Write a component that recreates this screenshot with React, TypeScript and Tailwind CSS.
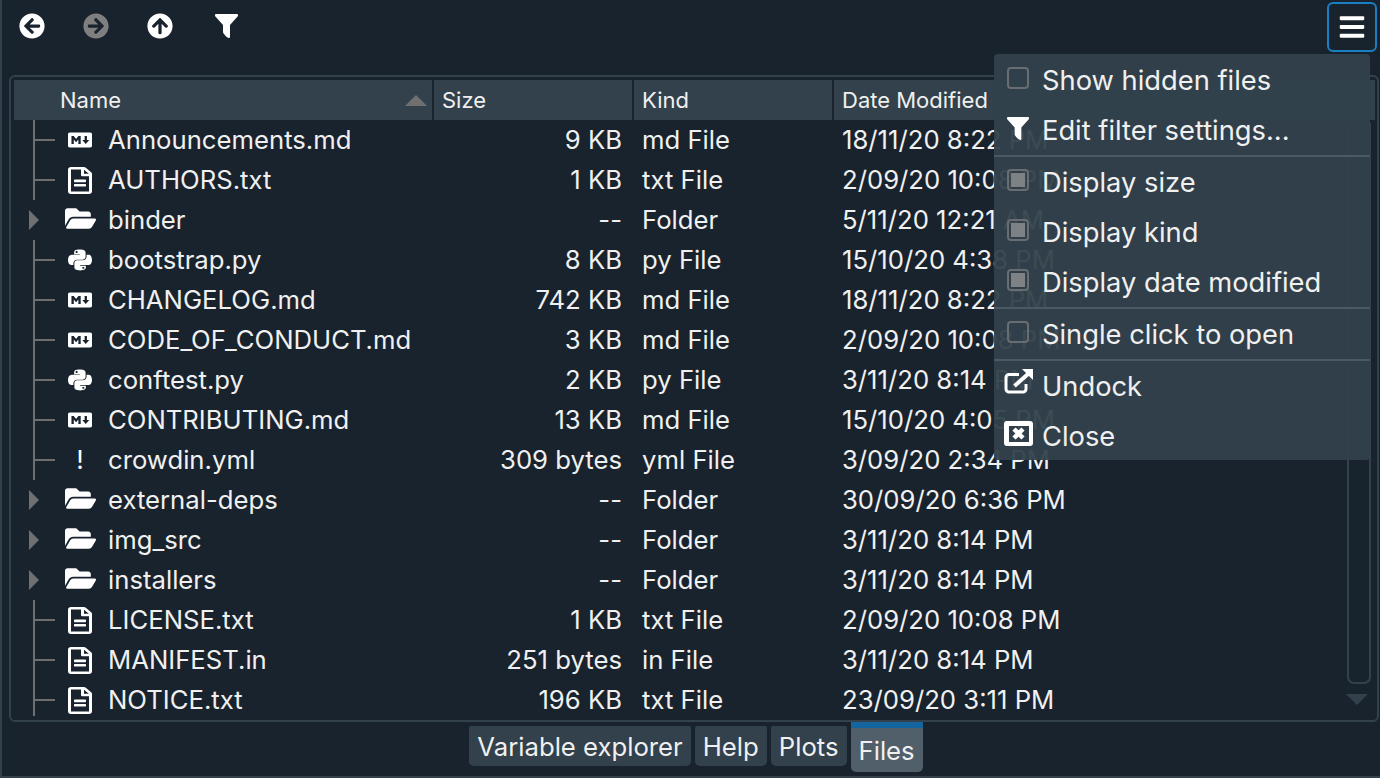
import type { ReactNode } from "react";
import { FaArrowCircleLeft, FaArrowCircleRight, FaArrowCircleUp, FaBars, FaFolderOpen, FaMarkdown, FaPython, FaRegFileAlt } from "react-icons/fa";

type Kind = "md" | "txt" | "folder" | "py" | "yml";

const FILES: { name: string; size: string; kind: string; date: string; icon: Kind }[] = [
  { name: "Announcements.md", size: "9 KB", kind: "md File", date: "18/11/20 8:22 PM", icon: "md" },
  { name: "AUTHORS.txt", size: "1 KB", kind: "txt File", date: "2/09/20 10:08 PM", icon: "txt" },
  { name: "binder", size: "--", kind: "Folder", date: "5/11/20 12:21 AM", icon: "folder" },
  { name: "bootstrap.py", size: "8 KB", kind: "py File", date: "15/10/20 4:38 PM", icon: "py" },
  { name: "CHANGELOG.md", size: "742 KB", kind: "md File", date: "18/11/20 8:22 PM", icon: "md" },
  { name: "CODE_OF_CONDUCT.md", size: "3 KB", kind: "md File", date: "2/09/20 10:08 PM", icon: "md" },
  { name: "conftest.py", size: "2 KB", kind: "py File", date: "3/11/20 8:14 PM", icon: "py" },
  { name: "CONTRIBUTING.md", size: "13 KB", kind: "md File", date: "15/10/20 4:05 PM", icon: "md" },
  { name: "crowdin.yml", size: "309 bytes", kind: "yml File", date: "3/09/20 2:34 PM", icon: "yml" },
  { name: "external-deps", size: "--", kind: "Folder", date: "30/09/20 6:36 PM", icon: "folder" },
  { name: "img_src", size: "--", kind: "Folder", date: "3/11/20 8:14 PM", icon: "folder" },
  { name: "installers", size: "--", kind: "Folder", date: "3/11/20 8:14 PM", icon: "folder" },
  { name: "LICENSE.txt", size: "1 KB", kind: "txt File", date: "2/09/20 10:08 PM", icon: "txt" },
  { name: "MANIFEST.in", size: "251 bytes", kind: "in File", date: "3/11/20 8:14 PM", icon: "txt" },
  { name: "NOTICE.txt", size: "196 KB", kind: "txt File", date: "23/09/20 3:11 PM", icon: "txt" },
];

function FilterIcon({ className }: { className: string }) {
  return (
    <svg viewBox="0 0 23 24" className={className}>
      <path d="M1 0 H22 Q23 0 23 1 V2 L15 11 V23 Q15 24 14 24 Q12 24 9 20 Q8 19 8 18 V11 L0 2 V1 Q0 0 1 0 Z" fill="#fff" />
    </svg>
  );
}

function FileIcon({ icon }: { icon: Kind }) {
  if (icon === "md") return <FaMarkdown className="shrink-0 text-[24px] text-white" />;
  if (icon === "txt") return <FaRegFileAlt preserveAspectRatio="none" className="h-[27px] w-6 shrink-0 text-white" />;
  if (icon === "py") return <FaPython preserveAspectRatio="none" className="h-6 w-6 shrink-0 text-white" />;
  if (icon === "folder") return <FaFolderOpen className="mt-[-3px] shrink-0 text-[31px] text-white" />;
  return <span className="text-[26px] leading-none text-white">!</span>;
}

function TreeMark({ folder }: { folder: boolean }) {
  if (folder) {
    return (
      <div className="flex h-full w-[34px] items-center">
        <svg width="10" height="20" viewBox="0 0 10 20" className="ml-[-4px]">
          <path d="M0 0 L10 10 L0 20 Z" fill="#707070" />
        </svg>
      </div>
    );
  }
  return (
    <div className="flex h-full w-[34px] items-center border-l-2 border-[#6f6f6f]">
      <div className="h-0.5 w-5 bg-[#6f6f6f]" />
    </div>
  );
}

function Check({ on }: { on: boolean }) {
  return (
    <div className="mt-[-4px] flex h-[22px] w-[22px] items-center justify-center rounded-[4px] border-2 border-[#686d72]">
      {on && <div className="h-[14px] w-[14px] bg-[#7e8285]" />}
    </div>
  );
}

function MenuItem({ icon, label }: { icon: ReactNode; label: string }) {
  return (
    <div className="flex h-[50px] shrink-0 items-center">
      <div className="flex w-[48px] justify-center">{icon}</div>
      <span className="pt-0.5">{label}</span>
    </div>
  );
}

function Tab({ label }: { label: string }) {
  return (
    <div className="mt-1 flex h-10 items-center rounded-b-[5px] rounded-t-[2px] bg-[#32414b] px-2 pt-0.5">
      {label}
    </div>
  );
}

export default function App() {
  return (
    <div className="relative flex h-[778px] w-[1380px] flex-col overflow-hidden bg-[#19232d] font-['Inter'] text-[25.7px] text-[#f0f0f0]">
      <div className="flex h-[778px] flex-col border-b-2 border-l-2 border-[#32414b] pl-[7px]">
        {/* Toolbar */}
        <div className="flex h-[75px] items-start">
          <div className="flex items-center pl-[10px] pt-[13px]">
            <FaArrowCircleLeft className="mr-[38px] text-[26px] text-white" />
            <FaArrowCircleRight className="mr-[38px] text-[26px] text-[#7f7f7f]" />
            <FaArrowCircleUp className="mr-[42px] text-[26px] text-white" />
            <FilterIcon className="h-6 w-[23px]" />
          </div>
          <div className="ml-auto mr-[3px] mt-[2px] flex h-[50px] w-[50px] items-center justify-center rounded-[6px] border-2 border-[#1a7fc2]">
            <FaBars className="text-[28px] text-white" />
          </div>
        </div>

        {/* File tree */}
        <div className="relative mr-px h-[647px] overflow-hidden rounded-[6px] border-2 border-[#32414b] pl-[3px] pr-[2px] pt-[3px]">
          <div className="flex h-10 gap-0.5 text-[22px]">
            <div className="flex w-[418px] items-center justify-between bg-[#32414b] pl-[46px] pr-[5px]">
              <span className="pt-px">Name</span>
              <svg width="22" height="11" viewBox="0 0 22 11">
                <path d="M11 0 L22 11 L0 11 Z" fill="#707070" />
              </svg>
            </div>
            <div className="flex w-[198px] items-center bg-[#32414b] pl-2 pt-px">Size</div>
            <div className="flex w-[198px] items-center bg-[#32414b] pl-2 pt-px">Kind</div>
            <div className="flex flex-1 items-center bg-[#32414b] pl-2 pt-px">Date Modified</div>
          </div>
          <div className="h-[596px] overflow-hidden">
            {FILES.map((file) => (
              <div key={file.name} className="flex h-10 items-center">
                <div className="flex h-full w-[420px] items-center pl-[19px]">
                  <TreeMark folder={file.icon === "folder"} />
                  <div className="mr-[15px] flex w-[26px] justify-center">
                    <FileIcon icon={file.icon} />
                  </div>
                  <span>{file.name}</span>
                </div>
                <div className="w-[188px] text-right">{file.size}</div>
                <div className="w-[220px] pl-[20px]">{file.kind}</div>
                <div>{file.date}</div>
              </div>
            ))}
          </div>

          {/* Scrollbar */}
          <div className="absolute right-[6px] top-[46px] h-[561px] w-6 rounded-b-[7px] border-2 border-[#32414b]" />
          <svg width="22" height="11" viewBox="0 0 22 11" className="absolute right-[9px] top-[617px]">
            <path d="M0 0 L22 0 L11 11 Z" fill="#32414b" />
          </svg>
        </div>

        {/* Tabs */}
        <div className="flex justify-center pl-[3px]">
          <div className="flex items-start gap-1">
            <Tab label="Variable explorer" />
            <Tab label="Help" />
            <Tab label="Plots" />
            <div className="flex h-[50px] flex-col rounded-b-[5px] border-t-[6px] border-[#1464a0] bg-[#505f69] px-2 pt-1">
              Files
            </div>
          </div>
        </div>
      </div>

      {/* Options menu */}
      <div className="absolute left-[994px] top-[54px] flex h-[406px] w-[376px] flex-col overflow-hidden rounded-[4px] bg-[#32414b]/95 pt-px text-[27.3px]">
        <MenuItem icon={<Check on={false} />} label="Show hidden files" />
        <MenuItem icon={<FilterIcon className="mt-[-3px] h-[23px] w-[22px]" />} label="Edit filter settings..." />
        <div className="h-0.5 shrink-0 bg-[#4a5a65]" />
        <MenuItem icon={<Check on />} label="Display size" />
        <MenuItem icon={<Check on />} label="Display kind" />
        <MenuItem icon={<Check on />} label="Display date modified" />
        <div className="h-0.5 shrink-0 bg-[#4a5a65]" />
        <MenuItem icon={<Check on={false} />} label="Single click to open" />
        <div className="h-0.5 shrink-0 bg-[#4a5a65]" />
        <MenuItem
          icon={
            <svg width="29" height="25" viewBox="0 0 29 25" className="mt-[-9px]">
              <path d="M15 5.5 H5 a3 3 0 0 0 -3 3 V20 a3 3 0 0 0 3 3 H19 a3 3 0 0 0 3 -3 V15" fill="none" stroke="#fff" strokeWidth="3" />
              <path d="M18 0 H29 V11 Z" fill="#fff" />
              <path d="M10.5 17 L24 5" fill="none" stroke="#fff" strokeWidth="4" />
            </svg>
          }
          label="Undock"
        />
        <MenuItem
          icon={
            <svg width="29" height="25" viewBox="0 0 29 25" className="mt-[-5px]">
              <path
                fillRule="evenodd"
                d="M3 0 H26 a3 3 0 0 1 3 3 V22 a3 3 0 0 1 -3 3 H3 a3 3 0 0 1 -3 -3 V3 a3 3 0 0 1 3 -3 Z M5 5 V21 H25 V5 Z"
                fill="#fff"
              />
              <path d="M10 8 L19 17 M19 8 L10 17" fill="none" stroke="#fff" strokeWidth="4.5" />
            </svg>
          }
          label="Close"
        />
      </div>
    </div>
  );
}
